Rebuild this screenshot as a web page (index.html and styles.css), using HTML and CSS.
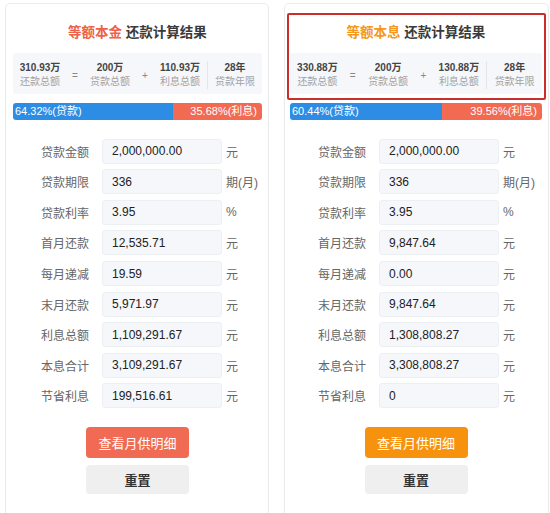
FILE: index.html
```html
<!DOCTYPE html>
<html lang="zh-CN">
<head>
    <meta charset="UTF-8">
    <meta name="viewport" content="width=device-width, initial-scale=1.0">
    <title>还款计算结果</title>
    <link rel="stylesheet" href="styles.css">
</head>
<body>
    <div class="page">
        <!-- 等额本金 -->
        <div class="card">
            <h2 class="title"><span class="type principal">等额本金</span> 还款计算结果</h2>

            <div class="summary">
                <div class="sum-item">
                    <div class="sum-value">310.93万</div>
                    <div class="sum-label">还款总额</div>
                </div>
                <div class="sum-sep">=</div>
                <div class="sum-item">
                    <div class="sum-value">200万</div>
                    <div class="sum-label">贷款总额</div>
                </div>
                <div class="sum-sep">+</div>
                <div class="sum-item">
                    <div class="sum-value">110.93万</div>
                    <div class="sum-label">利息总额</div>
                </div>
                <div class="sum-item years">
                    <div class="sum-value">28年</div>
                    <div class="sum-label">贷款年限</div>
                </div>
            </div>

            <div class="ratio">
                <div class="ratio-loan" style="width: 64.32%">64.32%(贷款)</div>
                <div class="ratio-interest">35.68%(利息)</div>
            </div>

            <div class="form">
                <label class="form-label">贷款金额</label>
                <input class="form-input" value="2,000,000.00" readonly>
                <span class="form-unit">元</span>

                <label class="form-label">贷款期限</label>
                <input class="form-input" value="336" readonly>
                <span class="form-unit">期(月)</span>

                <label class="form-label">贷款利率</label>
                <input class="form-input" value="3.95" readonly>
                <span class="form-unit">%</span>

                <label class="form-label">首月还款</label>
                <input class="form-input" value="12,535.71" readonly>
                <span class="form-unit">元</span>

                <label class="form-label">每月递减</label>
                <input class="form-input" value="19.59" readonly>
                <span class="form-unit">元</span>

                <label class="form-label">末月还款</label>
                <input class="form-input" value="5,971.97" readonly>
                <span class="form-unit">元</span>

                <label class="form-label">利息总额</label>
                <input class="form-input" value="1,109,291.67" readonly>
                <span class="form-unit">元</span>

                <label class="form-label">本息合计</label>
                <input class="form-input" value="3,109,291.67" readonly>
                <span class="form-unit">元</span>

                <label class="form-label">节省利息</label>
                <input class="form-input" value="199,516.61" readonly>
                <span class="form-unit">元</span>
            </div>

            <div class="actions">
                <button type="button" class="btn btn-detail principal">查看月供明细</button>
                <button type="button" class="btn btn-reset">重置</button>
            </div>
        </div>

        <!-- 等额本息 -->
        <div class="card">
            <div class="highlight"></div>
            <h2 class="title"><span class="type interest">等额本息</span> 还款计算结果</h2>

            <div class="summary">
                <div class="sum-item">
                    <div class="sum-value">330.88万</div>
                    <div class="sum-label">还款总额</div>
                </div>
                <div class="sum-sep">=</div>
                <div class="sum-item">
                    <div class="sum-value">200万</div>
                    <div class="sum-label">贷款总额</div>
                </div>
                <div class="sum-sep">+</div>
                <div class="sum-item">
                    <div class="sum-value">130.88万</div>
                    <div class="sum-label">利息总额</div>
                </div>
                <div class="sum-item years">
                    <div class="sum-value">28年</div>
                    <div class="sum-label">贷款年限</div>
                </div>
            </div>

            <div class="ratio">
                <div class="ratio-loan" style="width: 60.44%">60.44%(贷款)</div>
                <div class="ratio-interest">39.56%(利息)</div>
            </div>

            <div class="form">
                <label class="form-label">贷款金额</label>
                <input class="form-input" value="2,000,000.00" readonly>
                <span class="form-unit">元</span>

                <label class="form-label">贷款期限</label>
                <input class="form-input" value="336" readonly>
                <span class="form-unit">期(月)</span>

                <label class="form-label">贷款利率</label>
                <input class="form-input" value="3.95" readonly>
                <span class="form-unit">%</span>

                <label class="form-label">首月还款</label>
                <input class="form-input" value="9,847.64" readonly>
                <span class="form-unit">元</span>

                <label class="form-label">每月递减</label>
                <input class="form-input" value="0.00" readonly>
                <span class="form-unit">元</span>

                <label class="form-label">末月还款</label>
                <input class="form-input" value="9,847.64" readonly>
                <span class="form-unit">元</span>

                <label class="form-label">利息总额</label>
                <input class="form-input" value="1,308,808.27" readonly>
                <span class="form-unit">元</span>

                <label class="form-label">本息合计</label>
                <input class="form-input" value="3,308,808.27" readonly>
                <span class="form-unit">元</span>

                <label class="form-label">节省利息</label>
                <input class="form-input" value="0" readonly>
                <span class="form-unit">元</span>
            </div>

            <div class="actions">
                <button type="button" class="btn btn-detail interest">查看月供明细</button>
                <button type="button" class="btn btn-reset">重置</button>
            </div>
        </div>
    </div>
</body>
</html>
```

FILE: styles.css
```css
body {
    margin: 0;
    padding: 0;
    background-color: #ffffff;
    font-family: "Liberation Sans", Arial, "Noto Sans CJK SC", sans-serif;
    color: #333;
    overflow: hidden;
}

.page {
    display: flex;
    gap: 15px;
    padding: 3px 0 0 5px;
}

.card {
    position: relative;
    width: 264px;
    height: 530px;
    box-sizing: border-box;
    padding: 19px 6px 0 7px;
    border: 1px solid #ebebeb;
    border-radius: 5px;
    background-color: #fff;
}

.card + .card {
    width: 265px;
    padding-left: 5px;
}

/* red annotation frame round the second card's header */
.highlight {
    position: absolute;
    left: 2px;
    top: 9px;
    width: 259px;
    height: 87px;
    box-sizing: border-box;
    border: 2px solid #c9302c;
    border-radius: 2px;
}

.title {
    margin: 0 0 10px;
    font-size: 13.5px;
    line-height: 20px;
    font-weight: bold;
    text-align: center;
    color: #3a3a3a;
}

.principal {
    color: #ec6248;
}

.interest {
    color: #f5981c;
}

.summary {
    display: flex;
    align-items: center;
    padding: 8px 0 5px;
    background-color: #f5f7fa;
    border-radius: 2px;
}

.sum-item {
    flex: 1;
    text-align: center;
}

.sum-item.years {
    border-left: 1px solid #e3e6ea;
}

.sum-value {
    font-size: 10px;
    line-height: 14px;
    font-weight: bold;
    color: #444;
}

.sum-label {
    font-size: 10px;
    line-height: 14px;
    color: #a2a2a2;
}

.sum-sep {
    width: 16px;
    text-align: center;
    font-size: 10px;
    color: #888;
}

.ratio {
    display: flex;
    height: 17px;
    margin-top: 9px;
    border-radius: 3px;
    overflow: hidden;
    font-size: 11px;
    line-height: 17px;
    color: #fff;
}

.ratio-loan {
    padding-left: 2px;
    box-sizing: border-box;
    background-color: #2d8de4;
    white-space: nowrap;
}

.ratio-interest {
    flex: 1;
    padding-right: 5px;
    text-align: right;
    background-color: #f26a52;
    white-space: nowrap;
}

.form {
    display: grid;
    grid-template-columns: 89px 120px auto;
    row-gap: 5.6px;
    align-items: center;
    margin-top: 18.7px;
}

.form-label {
    padding-right: 13px;
    text-align: right;
    font-size: 12px;
    color: #666;
}

.form-input {
    width: 120px;
    height: 25px;
    box-sizing: border-box;
    padding: 0 0 0 9px;
    border: 1px solid #edf0f3;
    border-radius: 3px;
    background-color: #f5f7fa;
    font-family: "Liberation Sans", Arial, "Noto Sans CJK SC", sans-serif;
    font-size: 12px;
    color: #222;
    outline: none;
}

.form-unit {
    padding-left: 4px;
    font-size: 12px;
    color: #666;
    white-space: nowrap;
}

.actions {
    display: flex;
    flex-direction: column;
    align-items: center;
    gap: 7px;
    margin-top: 18.3px;
}

.btn {
    width: 103px;
    border: none;
    border-radius: 4px;
    font-family: "Liberation Sans", Arial, "Noto Sans CJK SC", sans-serif;
    font-size: 13px;
    cursor: pointer;
}

.btn-detail {
    height: 31px;
    color: #fff;
}

.btn-detail.principal {
    background-color: #f16a54;
}

.btn-detail.interest {
    background-color: #f7920f;
}

.btn-reset {
    height: 29.5px;
    background-color: #efefef;
    color: #333;
    font-weight: bold;
}
```
